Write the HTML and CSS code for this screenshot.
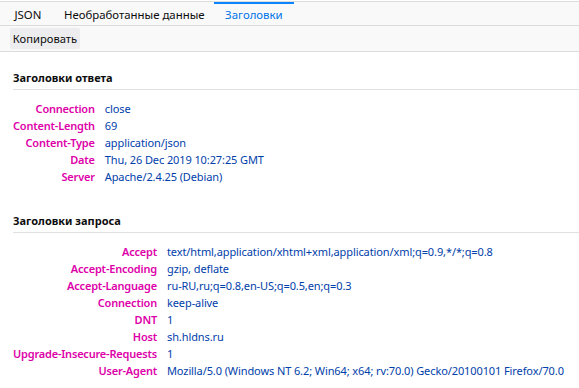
FILE: index.html
```html
<!DOCTYPE html>
<html lang="ru">
<head>
    <meta charset="UTF-8">
    <title>Заголовки</title>
    <link rel="stylesheet" href="styles.css">
</head>
<body>
    <div class="tabs">
        <span class="tab">JSON</span>
        <span class="tab">Необработанные данные</span>
        <span class="tab active">Заголовки</span>
    </div>
    <div class="toolbar">
        <button class="btn">Копировать</button>
    </div>
    <div class="panel">
        <div class="section">
            <div class="section-title">Заголовки ответа</div>
            <div class="headers">
                <span class="name">Connection</span><span class="value">close</span>
                <span class="name">Content-Length</span><span class="value">69</span>
                <span class="name">Content-Type</span><span class="value">application/json</span>
                <span class="name">Date</span><span class="value">Thu, 26 Dec 2019 10:27:25 GMT</span>
                <span class="name">Server</span><span class="value">Apache/2.4.25 (Debian)</span>
            </div>
        </div>
        <div class="section">
            <div class="section-title">Заголовки запроса</div>
            <div class="headers">
                <span class="name">Accept</span><span class="value">text/html,application/xhtml+xml,application/xml;q=0.9,*/*;q=0.8</span>
                <span class="name">Accept-Encoding</span><span class="value">gzip, deflate</span>
                <span class="name">Accept-Language</span><span class="value">ru-RU,ru;q=0.8,en-US;q=0.5,en;q=0.3</span>
                <span class="name">Connection</span><span class="value">keep-alive</span>
                <span class="name">DNT</span><span class="value">1</span>
                <span class="name">Host</span><span class="value">sh.hldns.ru</span>
                <span class="name">Upgrade-Insecure-Requests</span><span class="value">1</span>
                <span class="name">User-Agent</span><span class="value">Mozilla/5.0 (Windows NT 6.2; Win64; x64; rv:70.0) Gecko/20100101 Firefox/70.0</span>
            </div>
        </div>
    </div>
</body>
</html>
```

FILE: styles.css
```css
* {
    margin: 0;
    padding: 0;
    box-sizing: border-box;
}

body {
    padding-top: 1px;
    background: #fff;
    font-family: "Noto Sans", "Open Sans", sans-serif;
    font-size: 11px;
    color: #0c0c0d;
}

.tabs {
    display: flex;
    height: 25px;
    padding-left: 3px;
    border-top: 1px solid #dcdcdc;
    border-bottom: 1px solid #dcdcdc;
    background: #f9f9f9;
    font-size: 11.4px;
}

.tab {
    padding: 0 11px 0 11.5px;
    border-top: 2px solid transparent;
    line-height: 21px;
    color: #0c0c0d;
}

.tab.active {
    margin-left: -2px;
    border-top-color: #0a84ff;
    color: #0074e8;
}

.toolbar {
    height: 26px;
    padding: 2px 10px 0;
    border-bottom: 1px solid #dcdcdc;
    background: #f9f9f9;
}

.btn {
    width: 70px;
    height: 21px;
    padding: 0;
    border: none;
    border-radius: 2px;
    background: #ededf0;
    font: inherit;
    font-size: 11.2px;
    color: #0c0c0d;
}

.panel {
    padding-left: 13px;
}

.section {
    padding-top: 17px;
}

.section + .section {
    padding-top: 27px;
}

.section-title {
    padding-bottom: 3px;
    border-bottom: 1px solid #e0e0e2;
    font-weight: bold;
    line-height: 17px;
}

.headers {
    display: grid;
    grid-template-columns: auto 1fr;
    column-gap: 10px;
    padding-top: 10px;
    line-height: 17px;
    white-space: nowrap;
}

.name {
    text-align: right;
    font-weight: 600;
    letter-spacing: -0.2px;
    color: #dd00a9;
}

.value {
    letter-spacing: -0.1px;
    color: #003eaa;
}
```
